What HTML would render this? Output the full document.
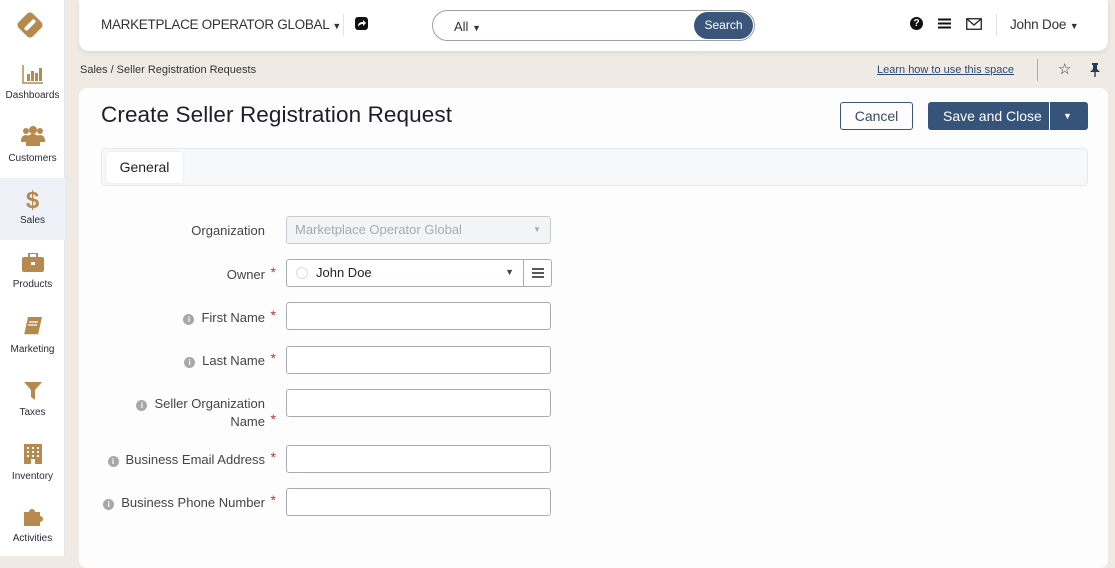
<!DOCTYPE html>
<html><head><meta charset="utf-8"><style>
*{box-sizing:border-box;margin:0;padding:0}
body{width:1115px;height:556px;overflow:hidden;font-family:"Liberation Sans",sans-serif;background:#efebe4;position:relative;color:#222}
.side{position:absolute;left:0;top:0;width:65px;height:556px;background:#fff;border-right:1px solid #e6e6e6}
.logo{position:absolute;left:15px;top:10px}
.it{position:absolute;left:0;width:65px;text-align:center;font-size:10px;color:#2a2a3a}
.it svg{display:block;margin:0 auto 6px}
.act{background:#eef2f8}
.top{position:absolute;left:79px;top:0;width:1029px;height:51px;background:#fff;border-radius:0 0 10px 10px;box-shadow:0 2px 4px rgba(0,0,0,.08)}
.card{position:absolute;left:79px;top:88px;width:1029px;height:480px;background:#fdfdfd;border-radius:8px}
.lbl{position:absolute;right:843px;font-size:13px;color:#444;text-align:right;white-space:nowrap}
.star{color:#b03a3a;font-size:14px;position:absolute;right:-11px;top:-3px}
.inp{position:absolute;left:207px;width:265px;height:28px;border:1px solid #a9adb3;border-radius:3px;background:#fff}
.info{display:inline-block;width:11px;height:11px;border-radius:50%;background:#a8a8a8;color:#fff;font-size:8px;line-height:11px;text-align:center;font-weight:bold;margin-right:7px;vertical-align:0}
</style></head><body>
<div class="side">
 <svg class="logo" width="30" height="30" viewBox="0 0 30 30"><rect x="5" y="5" width="20" height="20" rx="4" fill="#b68a4e" transform="rotate(45 15 15)"/><rect x="8" y="13" width="14" height="4" rx="2" fill="#fff" transform="rotate(-45 15 15)"/></svg>
 <div class="it" style="top:64px"><svg width="22" height="20" viewBox="0 0 22 20"><path d="M1 1V19H21" stroke="#b68a4e" stroke-width="1.5" fill="none"/><rect x="5" y="10" width="3" height="7" fill="#b68a4e"/><rect x="9" y="7" width="3" height="10" fill="#b68a4e"/><rect x="13" y="9" width="3" height="8" fill="#b68a4e"/><rect x="17" y="4" width="3" height="13" fill="#b68a4e"/></svg>Dashboards</div>
 <div class="it" style="top:125px"><svg width="24" height="22" viewBox="0 0 24 22"><circle cx="5" cy="6" r="3" fill="#b68a4e"/><circle cx="19" cy="6" r="3" fill="#b68a4e"/><circle cx="12" cy="5" r="4" fill="#b68a4e"/><path d="M0 15a5 5 0 0 1 10 0v2H0zM14 15a5 5 0 0 1 10 0v2H14z" fill="#b68a4e"/><path d="M5 21v-5a7 7 0 0 1 14 0v5z" fill="#b68a4e"/></svg>Customers</div>
 <div class="it act" style="top:178px;height:62px;padding-top:9px"><div style="color:#b68a4e;font-size:24px;font-weight:bold;line-height:28px">$</div>Sales</div>
 <div class="it" style="top:253px"><svg width="24" height="20" viewBox="0 0 24 20"><rect x="8" y="0" width="8" height="5" rx="1" fill="none" stroke="#b68a4e" stroke-width="2"/><rect x="1" y="4" width="22" height="15" rx="2" fill="#b68a4e"/><rect x="10" y="9" width="4" height="3" fill="#fff"/></svg>Products</div>
 <div class="it" style="top:316px"><svg width="22" height="22" viewBox="0 0 22 22"><path d="M6 1h14l-4 18H2z" fill="#b68a4e"/><path d="M2 19h14" stroke="#fff" stroke-width="1.5"/><path d="M7 6h9M6 9h9" stroke="#fff" stroke-width="1.2"/></svg>Marketing</div>
 <div class="it" style="top:381px"><svg width="20" height="20" viewBox="0 0 20 20"><path d="M1 1h18l-7 8v10l-4-3V9z" fill="#b68a4e"/></svg>Taxes</div>
 <div class="it" style="top:443px"><svg width="20" height="22" viewBox="0 0 20 22"><rect x="1" y="1" width="18" height="20" fill="#b68a4e"/><g fill="#fff"><rect x="4" y="4" width="2" height="2"/><rect x="9" y="4" width="2" height="2"/><rect x="14" y="4" width="2" height="2"/><rect x="4" y="8" width="2" height="2"/><rect x="9" y="8" width="2" height="2"/><rect x="14" y="8" width="2" height="2"/><rect x="4" y="12" width="2" height="2"/><rect x="9" y="12" width="2" height="2"/><rect x="14" y="12" width="2" height="2"/><rect x="8" y="16" width="4" height="5"/></g></svg>Inventory</div>
 <div class="it" style="top:505px"><svg width="22" height="22" viewBox="0 0 22 22"><path d="M2 7h5a3 3 0 1 1 6 0h5v4a3 3 0 1 1 0 6v4H2z" fill="#b68a4e"/></svg>Activities</div>
</div>

<div class="top">
 <div style="position:absolute;left:22px;top:17px;font-size:13.5px;color:#333;letter-spacing:-.3px;white-space:nowrap">MARKETPLACE OPERATOR GLOBAL <span style="font-size:9px">▼</span></div>
 <div style="position:absolute;left:264px;top:14px;width:1px;height:22px;background:#e2e2e2"></div>
 <div style="position:absolute;left:276px;top:17px;width:13px;height:13px;background:#111;border-radius:3px"><svg width="13" height="13" viewBox="0 0 13 13"><path d="M3 10c0-4 2-5 5-5V3l3 3-3 3V7c-2 0-4 1-5 3z" fill="#fff"/></svg></div>
 <div style="position:absolute;left:353px;top:10px;width:323px;height:31px;border:1px solid #9ca0a8;border-radius:16px;background:#fff">
  <div style="position:absolute;left:21px;top:8px;font-size:13px;color:#333">All <span style="font-size:9px">▼</span></div>
  <div style="position:absolute;right:1px;top:1px;width:59px;height:27px;border-radius:14px;background:#3a567a;color:#fff;font-size:12px;text-align:center;line-height:27px">Search</div>
 </div>
 <div style="position:absolute;left:831px;top:17px;width:13px;height:13px;border-radius:50%;background:#111;color:#fff;font-size:10px;font-weight:bold;text-align:center;line-height:13px">?</div>
 <svg style="position:absolute;left:859px;top:18px" width="13" height="11"><path d="M0 1.5h13M0 5.5h13M0 9.5h13" stroke="#111" stroke-width="2"/></svg>
 <svg style="position:absolute;left:887px;top:18px" width="16" height="12"><rect x=".75" y=".75" width="14.5" height="10.5" fill="none" stroke="#222" stroke-width="1.3"/><path d="M1 1l7 6 7-6" fill="none" stroke="#222" stroke-width="1.3"/></svg>
 <div style="position:absolute;left:917px;top:14px;width:1px;height:22px;background:#e2e2e2"></div>
 <div style="position:absolute;left:931px;top:17px;font-size:13.5px;color:#333;letter-spacing:-.2px">John Doe <span style="font-size:9px">▼</span></div>
</div>

<div style="position:absolute;left:80px;top:64px;font-size:11px;color:#333">Sales / Seller Registration Requests</div>
<div style="position:absolute;left:877px;top:64px;font-size:11px;color:#2d4a78;text-decoration:underline">Learn how to use this space</div>
<div style="position:absolute;left:1037px;top:59px;width:1px;height:22px;background:#aaa"></div>
<div style="position:absolute;left:1058px;top:60px;font-size:15px;color:#333">☆</div>
<svg style="position:absolute;left:1089px;top:63px" width="12" height="14" viewBox="0 0 12 14"><path d="M3 0h6v2H8v4l3 3H1l3-3V2H3z" fill="#2a3a55"/><rect x="5.3" y="9" width="1.4" height="5" fill="#2a3a55"/></svg>

<div class="card">
 <div style="position:absolute;left:22px;top:14px;font-size:22.5px;color:#1e1e2a;letter-spacing:.1px">Create Seller Registration Request</div>
 <div style="position:absolute;left:761px;top:14px;width:73px;height:28px;border:1px solid #3a567a;border-radius:3px;font-size:14px;color:#3a4a60;text-align:center;line-height:26px">Cancel</div>
 <div style="position:absolute;left:849px;top:14px;width:160px;height:28px;border-radius:3px;background:#36547a;color:#fff;font-size:14px;line-height:28px;padding-left:15px">Save and Close<div style="position:absolute;left:121px;top:0;width:1px;height:28px;background:#fff"></div><span style="position:absolute;left:135px;font-size:9px">▼</span></div>
 <div style="position:absolute;left:22px;top:60px;width:987px;height:38px;border:1px solid #e6e8ec;border-radius:5px;background:#f7f8fa">
  <div style="position:absolute;left:4px;top:3px;width:77px;height:31px;background:#fff;border-radius:4px;box-shadow:0 0 2px rgba(0,0,0,.1);font-size:14px;text-align:center;line-height:31px;color:#222">General</div>
 </div>
 <div class="lbl" style="top:135px">Organization</div>
 <div class="inp" style="top:128px;background:#f3f4f6;border-color:#c8ccd2;font-size:13px;color:#aaa;padding:5px 8px">Marketplace Operator Global<span style="position:absolute;right:9px;top:8px;font-size:8px">▼</span></div>
 <div class="lbl" style="top:179px">Owner<span class="star">*</span></div>
 <div class="inp" style="top:171px;width:266px;font-size:13px;padding:5px 9px;color:#222"><span style="display:inline-block;width:12px;height:12px;border-radius:50%;border:1px solid #ddd;margin-right:8px;vertical-align:-2px"></span>John Doe<span style="position:absolute;right:37px;top:7px;font-size:9px;color:#444">▼</span><div style="position:absolute;right:0;top:0;width:28px;height:26px;border-left:1px solid #a9adb3"><svg style="margin:8px 0 0 8px" width="12" height="10"><path d="M0 1h12M0 5h12M0 9h12" stroke="#222" stroke-width="1.6"/></svg></div></div>
 <div class="lbl" style="top:222px"><span class="info">i</span>First Name<span class="star">*</span></div>
 <div class="inp" style="top:214px"></div>
 <div class="lbl" style="top:265px"><span class="info">i</span>Last Name<span class="star">*</span></div>
 <div class="inp" style="top:258px"></div>
 <div class="lbl" style="top:307px;line-height:18px"><span class="info">i</span>Seller Organization<br>Name<span class="star" style="top:15px">*</span></div>
 <div class="inp" style="top:301px"></div>
 <div class="lbl" style="top:364px"><span class="info">i</span>Business Email Address<span class="star">*</span></div>
 <div class="inp" style="top:357px"></div>
 <div class="lbl" style="top:407px"><span class="info">i</span>Business Phone Number<span class="star">*</span></div>
 <div class="inp" style="top:400px"></div>
</div>
</body></html>
